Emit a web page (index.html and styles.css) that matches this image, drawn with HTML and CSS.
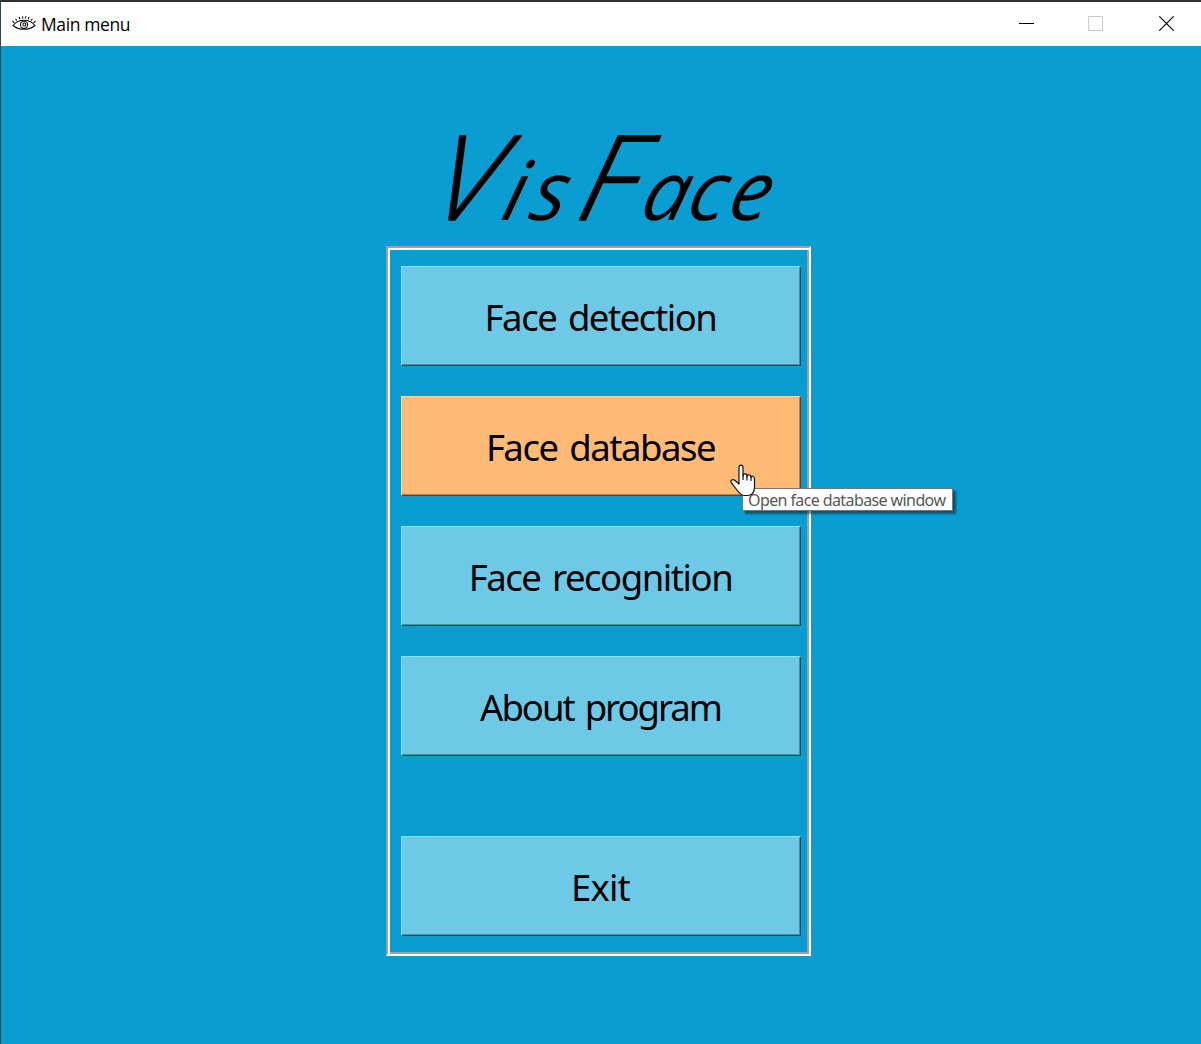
FILE: index.html
```html
<!DOCTYPE html>
<html lang="en">
<head>
<meta charset="utf-8">
<title>Main menu</title>
<link rel="stylesheet" href="styles.css">
</head>
<body>
<div class="window">
  <header class="titlebar">
    <svg class="eye" width="24" height="14" viewBox="0 0 24 14" fill="none" stroke="#111" stroke-width="1.1">
      <path d="M1 9.5C7 2.5 17 2.500 23 9.500C17 14.500 7 14.500 1 9.500Z"/>
      <circle cx="12" cy="8.800" r="3.600"/>
      <circle cx="12.300" cy="8.500" r="1.500"/>
      <path d="M.5 5l1.800 1.800M3.500 2.700l1.300 1.900M7.200 1l.8 2.200M10.500.3l.3 2.200M13.800.3l-.3 2.200M17 1l-.8 2.200M20.400 2.700l-1.300 1.900M23.500 5l-1.800 1.800"/>
    </svg>
    <span class="caption">Main menu</span>
    <div class="controls">
      <svg width="15" height="15" viewBox="0 0 15 15"><path d="M0 7.500H15" stroke="#000"/></svg>
      <svg width="15" height="15" viewBox="0 0 15 15"><path d="M.5.5h14v14H.5z" fill="none" stroke="#ccc"/></svg>
      <svg width="15" height="15" viewBox="0 0 15 15"><path d="M.3.3l14.400 14.400M14.700.3L.3 14.700" stroke="#000" stroke-width="1.100"/></svg>
    </div>
  </header>
  <main class="content">
    <svg class="logo" width="340" height="110" viewBox="0 0 340 110" role="heading" aria-label="VisFace">
      <text transform="translate(0 95) skewX(-14)"><tspan class="cap" x="-14">V</tspan><tspan class="low" x="58 86">is</tspan><tspan class="cap" x="133">F</tspan><tspan class="low" x="197 243 284">ace</tspan></text>
    </svg>
    <nav class="menu">
      <button class="item">Face detection</button>
      <div class="anchor">
        <button class="item active">Face database</button>
        <div class="tooltip">Open face database window</div>
        <svg class="pointer" width="26" height="33" viewBox="0 0 26 33">
          <path d="M9 20V3.500C9 .2 13 .2 13 3.500V12C13 9 17 9.300 17 12.500C17.500 9.800 21 10.200 21 13.500C21.500 11.200 24.500 12 24.500 15V23C24.500 28 22 31.500 17 31.500H15C11 31.500 9 29 7 26L1.300 18.700C0 16.500 2.500 14.500 4.700 16.200Z" fill="#fff" stroke="#111" stroke-width="1.200" stroke-linejoin="round"/>
          <path d="M13 11v5M17 12v4.500M21 13v4" stroke="#111" stroke-width="1.200"/>
        </svg>
      </div>
      <button class="item">Face recognition</button>
      <button class="item about">About program</button>
      <button class="item exit">Exit</button>
    </nav>
  </main>
</div>
</body>
</html>
```
FILE: styles.css
```css
* { box-sizing: border-box; }
body { margin: 0; font-family: "Noto Sans", sans-serif; color: #000; }
.window { width: 1201px; height: 1044px; overflow: hidden; border-top: 2px solid #302e2f; border-left: 1px solid #24495b; background: #0a9dd1; display: flex; flex-direction: column; }
.titlebar { height: 44px; flex: none; background: #fff; display: flex; align-items: center; padding: 0 27px 0 11px; }
.eye { margin-top: -2px; }
.caption { font-family: "Open Sans", sans-serif; font-size: 17.5px; letter-spacing: -.4px; line-height: 24px; margin-left: 5px; margin-top: -1px; white-space: nowrap; }
.controls { margin-left: auto; display: flex; gap: 55px; margin-top: -1px; }
.controls svg { display: block; }
.controls svg:nth-child(2) { margin: 0 1px 0 -1px; }
.content { display: flex; flex-direction: column; align-items: flex-start; padding: 79px 0 0 385px; }
.logo { display: block; margin-left: 55px; margin-bottom: 11px; overflow: visible; font-family: "Open Sans", sans-serif; font-style: italic; }
.cap { font-size: 118px; font-weight: 300; stroke: #000; stroke-width: 1.6px; stroke-linejoin: round; }
.low { font-size: 82px; font-weight: 400; }
.menu { width: 425px; height: 710px; padding: 18px 8px 0 13px; border: 2px solid; border-color: #a0a0a0 #fff #fff #a0a0a0; box-shadow: inset 2px 2px #fff, inset -2px -2px #a0a0a0; display: flex; flex-direction: column; gap: 30px; }
.menu { padding: 16px 6px 0 11px; border-width: 2px; }
.menu { padding: 18px 8px 0 13px; }
.item { display: block; width: 400px; height: 100px; flex: none; margin: 0; padding: 2px 1px 0 0; border: 1px solid; border-color: #8be0f6 #2b4b56 #2b4b56 #8be0f6; box-shadow: inset -1px -1px #4d8da1; background: #6ec9e6; color: #000; font-family: "Noto Sans", sans-serif; font-size: 36.5px; letter-spacing: -1.45px; word-spacing: 3.5px; line-height: 50px; }
.active { background: #ffba75; border-color: #ffd29f #59422b #59422b #ffd29f; box-shadow: inset -1px -1px #b38252; }
.anchor { position: relative; }
.tooltip { position: absolute; left: 341px; top: 92px; width: 211px; height: 23px; border: 1px solid #767676; background: #fff; box-shadow: 3px 3px 2px rgba(0,0,0,.45); color: #575757; font-size: 16px; line-height: 23px; letter-spacing: -.6px; padding-left: 5px; white-space: nowrap; }
.pointer { position: absolute; left: 329px; top: 68px; }
.about { letter-spacing: -2px; }
.exit { margin-top: 50px; letter-spacing: -.8px; }
```
